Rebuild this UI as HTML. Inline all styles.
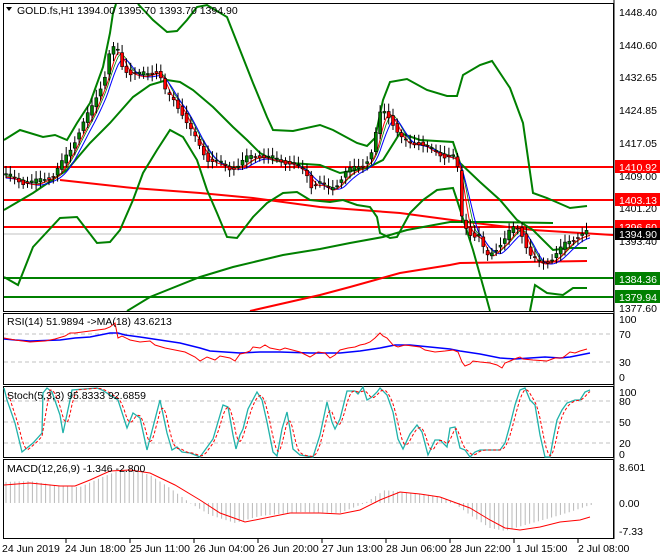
<!DOCTYPE html><html><head><style>
body{margin:0;background:#fff;width:660px;height:560px;overflow:hidden;font-family:"Liberation Sans",sans-serif}
svg{display:block}
text{font-family:"Liberation Sans",sans-serif;font-size:10.5px;fill:#000}
</style></head><body>
<svg id="s" width="660" height="560" xmlns="http://www.w3.org/2000/svg">
<rect width="660" height="560" fill="#fff"/>
<line x1="4" y1="234" x2="613" y2="234" stroke="#c0c0c0"/>
<line x1="4" y1="167" x2="613" y2="167" stroke="#f00" stroke-width="2"/>
<line x1="4" y1="200" x2="613" y2="200" stroke="#f00" stroke-width="2"/>
<line x1="4" y1="227" x2="613" y2="227" stroke="#f00" stroke-width="2"/>
<line x1="4" y1="278" x2="613" y2="278" stroke="#008000" stroke-width="2"/>
<line x1="4" y1="297" x2="613" y2="297" stroke="#008000" stroke-width="2"/>
<polyline fill="none" stroke="#f00" stroke-width="2" points="60,180 133,188 200,193 253,198 320,207 400,213 467,222 533,230 613,235"/>
<polyline fill="none" stroke="#008000" stroke-width="2" points="127,311 150,297 200,277 233,267 283,255 320,249 350,243 383,237 407,230 450,222 493,222 553,223"/>
<polyline fill="none" stroke="#f00" stroke-width="2" points="250,311 320,295 350,287 400,273 450,265 460,263 587,261"/>
<!-- upper BB -->
<polyline fill="none" stroke="#008000" stroke-width="2" points="4,140 20,130 43,137 55,135 67,140 77,123 90,103 103,67 110,33 113,13 116,4"/>
<polyline fill="none" stroke="#008000" stroke-width="2" points="138,4 153,20 167,32 177,31 187,20 197,7 207,5 227,17 240,50 253,83 267,117 273,130 293,131 320,125 333,130 357,143 367,146 375,138 383,100 390,82 407,79 427,90 447,96 457,96 463,75 480,65 492,61 510,88 523,123 533,193 547,198 570,208 587,206"/>
<!-- middle -->
<polyline fill="none" stroke="#008000" stroke-width="2" points="4,210 33,193 67,170 90,143 110,123 133,97 150,85 167,80 180,82 193,90 213,107 233,127 247,140 260,153 273,160 290,163 320,165 340,173 367,168 383,160 400,133 420,140 453,142 460,163 480,182 500,200 517,220 533,230 553,250 570,248 587,248"/>
<!-- lower BB -->
<polyline fill="none" stroke="#008000" stroke-width="2" points="4,277 18,285 33,247 60,218 77,217 97,243 110,242 120,230 133,200 143,173 157,150 170,130 183,137 197,160 207,190 217,213 227,237 237,238 253,217 267,203 283,193 297,192 310,200 330,202 343,200 357,205 370,207 377,217 380,233 390,238 397,237 410,213 423,200 437,190 453,188 457,200 473,250 487,300 490,311"/>
<polyline fill="none" stroke="#008000" stroke-width="2" points="530,311 535,285 547,293 563,295 573,288 587,288"/>
<g id="ma"></g>
<g id="cd"></g>
<rect x="3.5" y="3.5" width="610" height="308" fill="none" stroke="#000"/>
<rect x="3.5" y="313.5" width="610" height="71" fill="none" stroke="#000"/>
<rect x="3.5" y="386.5" width="610" height="71" fill="none" stroke="#000"/>
<rect x="3.5" y="459.5" width="610" height="79" fill="none" stroke="#000"/>
<g stroke="#c0c0c0" stroke-dasharray="4,3">
<line x1="4" y1="334" x2="613" y2="334"/><line x1="4" y1="362" x2="613" y2="362"/>
<line x1="4" y1="401" x2="613" y2="401"/><line x1="4" y1="422" x2="613" y2="422"/><line x1="4" y1="443" x2="613" y2="443"/>
</g>
<polyline fill="none" stroke="#00f" stroke-width="1.5" points="4,339 15,340 30,341 60,340 75,338 90,337 110,333 118,333 125,335 140,337 160,340 180,343 200,348 210,351 240,353 260,352 280,352 310,353 340,353 360,351 380,348 395,345 410,345 430,347 450,349 460,351 480,354 500,358 515,359 530,358 545,357 560,358 570,357 580,355 590,353"/>
<polyline fill="none" stroke="#f00" points="4,338 15,340 30,342 45,341 55,339 65,336 70,333 75,333 90,331 105,329 110,327 115,323 118,338 122,336 130,340 140,342 150,341 155,345 165,348 175,350 185,352 195,357 200,361 207,357 215,360 220,356 230,358 235,361 240,354 245,353 250,351 253,347 260,348 265,345 270,348 280,350 285,348 300,352 310,357 318,352 325,353 330,358 335,355 340,350 348,348 355,347 360,345 365,344 370,342 375,338 380,333 383,336 387,338 393,345 398,347 405,345 420,347 425,350 435,352 445,351 453,350 458,352 462,362 465,366 470,364 473,361 480,362 490,363 497,365 502,368 505,363 510,361 517,358 520,357 523,359 533,360 547,361 555,358 562,358 565,356 570,352 575,353 580,351 587,349"/>
<g id="osc"></g>
<g id="hist"></g>
<polyline fill="none" stroke="#f00" points="4,485 30,483 60,486 75,486 90,480 110,471 130,470 150,473 175,485 200,500 220,513 245,522 270,517 290,513 320,513 340,514 360,510 380,500 400,492 420,494 440,497 470,508 490,520 505,528 520,530 540,527 560,522 580,520 590,517"/>
<polygon points="6,7 12,7 9,11" fill="#000"/>
<text x="17" y="14">GOLD.fs,H1  1394.00 1395.70 1393.70 1394.90</text>
<text x="7" y="325">RSI(14) 51.9894  -&gt;MA(18) 43.6213</text>
<text x="7" y="399">Stoch(5,3,3) 95.8333 92.6859</text>
<text x="7" y="472">MACD(12,26,9) -1.346 -2.800</text>
<g font-size="10">
<text x="2" y="552">24 Jun 2019</text><text x="65" y="552">24 Jun 18:00</text><text x="130" y="552">25 Jun 11:00</text><text x="194" y="552">26 Jun 04:00</text><text x="258" y="552">26 Jun 20:00</text><text x="322" y="552">27 Jun 13:00</text><text x="386" y="552">28 Jun 06:00</text><text x="450" y="552">28 Jun 22:00</text><text x="516" y="552">1 Jul 15:00</text><text x="578" y="552">2 Jul 08:00</text>
</g>
<g>
<text x="619" y="16">1448.40</text><text x="619" y="49">1440.60</text><text x="619" y="81">1432.65</text><text x="619" y="114">1424.85</text><text x="619" y="147">1417.05</text><text x="619" y="180">1409.00</text><text x="619" y="212">1401.20</text><text x="619" y="245">1393.40</text><text x="619" y="279">1385.40</text><text x="619" y="312">1377.60</text>
<rect x="615" y="160" width="45" height="13" fill="#f00"/><text x="619" y="171" style="fill:#fff">1410.92</text>
<rect x="615" y="193" width="45" height="13" fill="#f00"/><text x="619" y="204" style="fill:#fff">1403.13</text>
<rect x="615" y="220" width="45" height="13" fill="#f00"/><text x="619" y="231" style="fill:#fff">1396.60</text>
<rect x="615" y="228" width="45" height="12" fill="#000"/><text x="619" y="238" style="fill:#fff">1394.90</text>
<rect x="615" y="272" width="45" height="13" fill="#008000"/><text x="619" y="283" style="fill:#fff">1384.36</text>
<rect x="615" y="290" width="45" height="13" fill="#008000"/><text x="619" y="301" style="fill:#fff">1379.94</text>
<text x="619" y="323">100</text><text x="619" y="338">70</text><text x="619" y="366">30</text><text x="619" y="381">0</text>
<text x="619" y="396">100</text><text x="619" y="405">80</text><text x="619" y="426">50</text><text x="619" y="447">20</text><text x="619" y="458">0</text>
<text x="619" y="471">8.601</text><text x="619" y="507">0.00</text><text x="619" y="535">-7.33</text>
</g>
<g stroke="#000"><line x1="614" y1="0" x2="614" y2="539"/>
<line x1="66" y1="539" x2="66" y2="543"/><line x1="130" y1="539" x2="130" y2="543"/><line x1="194" y1="539" x2="194" y2="543"/><line x1="258" y1="539" x2="258" y2="543"/><line x1="322" y1="539" x2="322" y2="543"/><line x1="386" y1="539" x2="386" y2="543"/><line x1="450" y1="539" x2="450" y2="543"/><line x1="514" y1="539" x2="514" y2="543"/><line x1="578" y1="539" x2="578" y2="543"/></g>
</svg>
<script>
var NS="http://www.w3.org/2000/svg";
function el(p,t,a){var e=document.createElementNS(NS,t);for(var k in a)e.setAttribute(k,a[k]);p.appendChild(e);return e;}
function interp(P,x){if(x<=P[0][0])return P[0][1];for(var i=0;i<P.length-1;i++){if(x<=P[i+1][0]){var t=(x-P[i][0])/(P[i+1][0]-P[i][0]);return P[i][1]+t*(P[i+1][1]-P[i][1]);}}return P[P.length-1][1];}
var P=[[4,175],[15,178],[25,182],[35,183],[45,178],[55,175],[62,165],[70,152],[78,135],[85,122],[92,110],[100,90],[106,75],[110,55],[113,50],[118,48],[122,65],[130,72],[140,75],[150,73],[157,70],[163,80],[167,95],[175,100],[183,112],[190,128],[197,140],[203,150],[210,160],[220,163],[230,168],[240,165],[250,157],[260,155],[270,158],[280,160],[290,162],[300,168],[307,172],[312,185],[320,182],[330,190],[338,183],[347,172],[357,168],[365,163],[372,155],[378,130],[382,110],[387,112],[392,118],[397,130],[403,140],[410,143],[420,142],[428,148],[436,152],[445,155],[455,157],[460,175],[463,220],[468,228],[474,236],[480,236],[487,258],[494,250],[500,245],[506,240],[512,230],[518,226],[524,235],[530,255],[538,262],[546,262],[553,258],[560,252],[567,243],[574,238],[580,235],[588,233]];
function f(x){return interp(P,x);}
var cd=document.getElementById("cd"),ma=document.getElementById("ma");
var r=[],b=[],g=[];
for(var x=6;x<=590;x+=4.3){var o=f(x-3),c=f(x+1)+Math.sin(x*1.7)*3;var hi=Math.min(o,c)-3-Math.abs(Math.sin(x*2.3))*5,lo=Math.max(o,c)+3+Math.abs(Math.cos(x*1.3))*4;
el(cd,"line",{x1:x,y1:hi,x2:x,y2:lo,stroke:"#000"});
var up=c<o;el(cd,"rect",{x:x-1.5,y:Math.min(o,c),width:3,height:Math.max(1,Math.abs(o-c)),fill:up?"#008000":"#f00",stroke:"#000","stroke-width":0.6});}
for(var x=6;x<=590;x+=2){var av=function(d){var s=0;for(var k=0;k<d;k++)s+=f(x-k*2);return s/d;};r.push(x+","+(av(5)+2));b.push(x+","+(av(9)+3));g.push(x+","+(av(7)+1));}
el(ma,"polyline",{points:g.join(" "),fill:"none",stroke:"#008000","stroke-width":0.8});
el(ma,"polyline",{points:b.join(" "),fill:"none",stroke:"#00f"});
el(ma,"polyline",{points:r.join(" "),fill:"none",stroke:"#f00"});
var S=[[4,388],[7,400],[15,423],[22,452],[33,443],[42,433],[43,393],[47,388],[52,392],[60,415],[63,433],[70,400],[72,390],[97,388],[102,390],[118,400],[127,428],[133,413],[140,418],[147,450],[153,427],[160,400],[167,433],[172,450],[177,447],[182,452],[190,453],[200,457],[213,439],[223,405],[228,407],[233,435],[236,449],[240,435],[243,429],[248,409],[257,392],[262,400],[267,422],[273,452],[277,456],[282,429],[287,412],[290,429],[293,449],[300,455],[313,457],[320,435],[327,402],[332,422],[335,429],[340,419],[347,391],[355,391],[358,394],[363,387],[367,400],[372,397],[377,392],[380,388],[387,395],[393,412],[398,439],[403,449],[410,434],[417,425],[422,432],[428,455],[435,440],[440,440],[447,447],[450,428],[455,427],[460,448],[465,450],[470,457],[475,452],[480,450],[490,450],[500,450],[505,443],[510,425],[515,405],[520,390],[525,388],[530,400],[535,405],[540,435],[545,457],[550,457],[553,440],[557,420],[562,410],[567,403],[575,400],[580,400],[585,392],[590,390]];
var osc=document.getElementById("osc");
el(osc,"polyline",{points:S.map(function(p){return p.join(",")}).join(" "),fill:"none",stroke:"#20b2aa","stroke-width":1.3});
var sd=[];for(var x=8;x<=590;x+=2){var s=0;for(var k=0;k<4;k++)s+=interp(S,x-k*2);sd.push(x+","+(s/4));}
el(osc,"polyline",{points:sd.join(" "),fill:"none",stroke:"#f00","stroke-dasharray":"3,2"});
var H=[[4,482],[30,481],[60,486],[80,487],[100,478],[120,470],[135,470],[150,475],[170,488],[190,503],[210,515],[235,523],[260,516],[300,512],[340,513],[365,503],[385,490],[400,492],[430,495],[450,500],[470,515],[490,528],[505,531],[525,525],[550,518],[570,512],[590,505]];
var hg=document.getElementById("hist");
for(var x=6;x<592;x+=4.4){var y1=interp(H,x);el(hg,"line",{x1:x,y1:Math.min(503,y1),x2:x,y2:Math.max(503,y1),stroke:"#b8b8b8"});}
</script>
</body></html>
